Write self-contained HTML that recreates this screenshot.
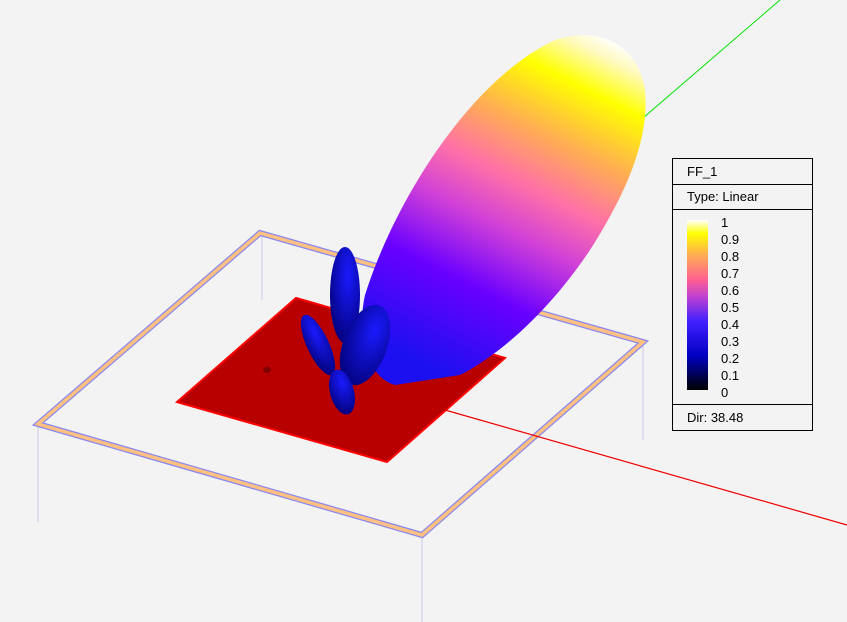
<!DOCTYPE html>
<html><head><style>
body{margin:0;width:847px;height:622px;background:#f3f3f3;overflow:hidden;font-family:"Liberation Sans",sans-serif;}
svg{position:absolute;left:0;top:0}
.lg{position:absolute;left:672px;top:158px;width:139px;height:271px;border:1px solid #000;background:#f3f3f3;font-size:13px;color:#000}
.r{position:absolute;left:0;width:139px;border-bottom:1px solid #000}
.lab{position:absolute;left:48px;font-size:13px;line-height:13px}
</style></head><body>
<svg width="847" height="622" viewBox="0 0 847 622">
<defs>
<linearGradient id="g" gradientUnits="userSpaceOnUse" x1="440" y1="375" x2="610" y2="38">
<stop offset="0" stop-color="#1a10f0"/><stop offset="0.25" stop-color="#6a00ff"/><stop offset="0.42" stop-color="#d040d8"/><stop offset="0.55" stop-color="#ff70a8"/><stop offset="0.7" stop-color="#ffb050"/><stop offset="0.85" stop-color="#ffff00"/><stop offset="0.95" stop-color="#fffac0"/><stop offset="1" stop-color="#ffffff"/>
</linearGradient>
<radialGradient id="b" cx="0.6" cy="0.3" r="0.8"><stop offset="0" stop-color="#1a1aff"/><stop offset="1" stop-color="#000070"/></radialGradient>
</defs>
<line x1="643" y1="118" x2="780" y2="0" stroke="#00e000" stroke-width="1"/>
<g stroke-width="1" fill="none" stroke="#c8c8e8">
<line x1="38" y1="424" x2="38" y2="522"/><line x1="422" y1="535" x2="422" y2="622"/><line x1="643" y1="342" x2="643" y2="440"/><line x1="262" y1="233" x2="262" y2="300"/>
</g>
<polygon points="260,233 643,342 422,535 38,424" fill="none" stroke="#8888ee" stroke-width="6"/>
<polygon points="260,233 643,342 422,535 38,424" fill="none" stroke="#ffc080" stroke-width="3.5"/>
<polygon points="296,298 505,358 387,462 177,402" fill="#b80000" stroke="#ff0000" stroke-width="2"/>
<line x1="445" y1="410" x2="847" y2="525" stroke="#ee0000" stroke-width="1.2"/>
<ellipse cx="267" cy="370" rx="4" ry="3" fill="#800000"/>
<ellipse cx="345" cy="295" rx="15" ry="48" fill="url(#b)"/>
<path d="M395,385 C368,378 356,335 365,295 C395,200 470,80 555,40 C600,25 638,45 645,90 C650,140 625,195 590,250 C550,310 500,355 460,375 Z" fill="url(#g)"/>
<ellipse cx="318" cy="345" rx="11" ry="33" transform="rotate(-25 318 345)" fill="url(#b)"/>
<ellipse cx="365" cy="345" rx="22" ry="42" transform="rotate(20 365 345)" fill="url(#b)"/>
<ellipse cx="342" cy="392" rx="12" ry="23" transform="rotate(-15 342 392)" fill="url(#b)"/>
</svg>
<div class="lg">
<div class="r" style="top:0;height:25px"><span style="position:absolute;left:14px;top:5px">FF_1</span></div>
<div class="r" style="top:25px;height:25px"><span style="position:absolute;left:14px;top:5px">Type: Linear</span></div>
<div style="position:absolute;left:14px;top:61px;width:21px;height:170px;background:linear-gradient(to top,#000 0%,#0000c0 20%,#4020ff 40%,#c040d0 55%,#ff6090 65%,#ffb050 80%,#ffff00 92%,#fff 100%)"></div>
<div class="lab" style="top:57px">1</div><div class="lab" style="top:74px">0.9</div><div class="lab" style="top:91px">0.8</div><div class="lab" style="top:108px">0.7</div><div class="lab" style="top:125px">0.6</div><div class="lab" style="top:142px">0.5</div><div class="lab" style="top:159px">0.4</div><div class="lab" style="top:176px">0.3</div><div class="lab" style="top:193px">0.2</div><div class="lab" style="top:210px">0.1</div><div class="lab" style="top:227px">0</div>
<div style="position:absolute;left:0;top:245px;width:139px;border-top:1px solid #000"></div>
<span style="position:absolute;left:14px;top:251px">Dir: 38.48</span>
</div>
</body></html>
